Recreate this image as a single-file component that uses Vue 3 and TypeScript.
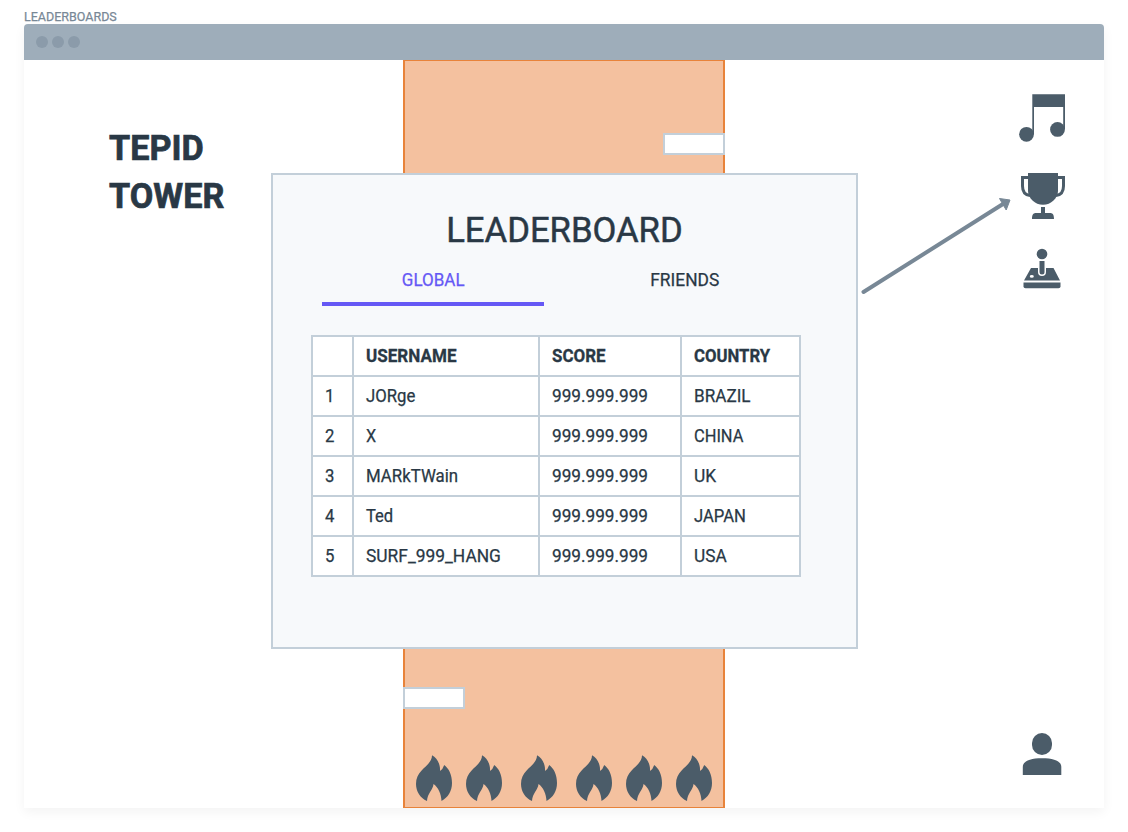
<script setup lang="ts">
interface Player {
  name: string
  nameScale: number
  score: string
  country: string
  countryScale: number
}

const players: Player[] = [
  { name: 'JORge', nameScale: 0.93, score: '999.999.999', country: 'BRAZIL', countryScale: 0.952 },
  { name: 'X', nameScale: 0.9, score: '999.999.999', country: 'CHINA', countryScale: 0.912 },
  { name: 'MARkTWain', nameScale: 0.935, score: '999.999.999', country: 'UK', countryScale: 0.965 },
  { name: 'Ted', nameScale: 0.92, score: '999.999.999', country: 'JAPAN', countryScale: 0.925 },
  { name: 'SURF_999_HANG', nameScale: 0.965, score: '999.999.999', country: 'USA', countryScale: 0.96 },
]

const flames: number[] = [416, 466, 521, 576, 626, 676]
</script>

<template>
  <div class="page">
    <div class="caption"><span>LEADERBOARDS</span></div>
    <main class="window">
      <header class="bar"><i></i><i></i><i></i></header>
      <section class="stage">
        <h1 class="brand"><span>TEPID</span><br><span>TOWER</span></h1>

        <div class="shaft">
          <div class="ledge ledge-top"></div>
          <div class="ledge ledge-bottom"></div>
        </div>
        <svg v-for="x in flames" :key="x" class="flame" :style="{ left: x - 24 + 'px' }" width="36" height="46" viewBox="0 0 36 46">
          <path d="M16 .3C21 3 24.500 9 24 16Q27 14 28.200 10C33 13.500 36 20 36 28C36 36 32 42.500 25.500 46C25.300 39 22 32 17.500 29C17 35 11.500 38 11 46C4 43 0 36 0 29C0 13.500 16 11.500 16 .3Z" />
        </svg>

        <section class="panel">
          <h2><span>LEADERBOARD</span></h2>
          <nav class="tabs">
            <span class="tab active"><span class="global">GLOBAL</span></span>
            <span class="tab"><span class="friends">FRIENDS</span></span>
          </nav>
          <div class="table">
            <div class="cell"></div>
            <div class="cell head"><span class="h-user">USERNAME</span></div>
            <div class="cell head"><span class="h-score">SCORE</span></div>
            <div class="cell head"><span class="h-country">COUNTRY</span></div>
            <template v-for="(p, i) in players" :key="p.name">
              <div class="cell"><span class="rank">{{ i + 1 }}</span></div>
              <div class="cell"><span :style="{ transform: `scaleX(${p.nameScale})` }">{{ p.name }}</span></div>
              <div class="cell"><span class="score">{{ p.score }}</span></div>
              <div class="cell"><span :style="{ transform: `scaleX(${p.countryScale})` }">{{ p.country }}</span></div>
            </template>
          </div>
        </section>

        <svg class="arrow" width="160" height="110" viewBox="856 190 160 110">
          <path d="M863.500 292L1003 204" fill="none" stroke="#788896" stroke-width="4" stroke-linecap="round" />
          <path d="M999.500 198.500L1010 200L1006.200 210Z" fill="#788896" stroke="#788896" stroke-width="1" stroke-linejoin="round" />
        </svg>

        <svg class="icons" width="60" height="700" viewBox="1012 90 60 700">
          <path d="M1032.300 94.300H1065V129H1063.200V107H1034V134H1032.300Z" />
          <circle cx="1026.500" cy="134.300" r="7.400" />
          <circle cx="1057.500" cy="129.400" r="7.400" />
          <path d="M1028 173H1058V191C1058 198 1051 204.800 1043 204.800C1035 204.800 1028 198 1028 191Z" />
          <path d="M1029 177.500H1022.500V186C1022.500 192 1025 195 1030 195.500M1057 177.500H1063.500V186C1063.500 192 1061 195 1056 195.500" fill="none" stroke="#4b5c69" stroke-width="3" />
          <path d="M1041 207H1045V213H1050C1053 213 1054 215 1054 219H1032C1032 215 1033 213 1036 213H1041Z" />
          <circle cx="1042" cy="254" r="5.300" />
          <path d="M1039.500 261H1044.500V272A2.500 2.500 0 0 1 1039.500 272Z" />
          <path fill-rule="evenodd" d="M1031 268H1038V272A4 4 0 0 0 1046 272V268H1053.500L1060 280.500H1024ZM1031.800 275A2 1.400 0 1 0 1031.800 277.800A2 1.400 0 1 0 1031.800 275Z" />
          <path d="M1023.500 282.500H1060.500V286.500Q1060.500 288.300 1058.500 288.300H1025.500Q1023.500 288.300 1023.500 286.500Z" />
          <rect x="1032" y="733" width="20" height="22" rx="10" />
          <path d="M1022.800 775V767C1022.800 761 1030 758.200 1042 758.200C1054 758.200 1061.300 761 1061.300 767V775Z" />
        </svg>
      </section>
    </main>
  </div>
</template>

<style>
html, body { background: #fff; overflow: hidden; }
</style>

<style scoped>
.page { width: 1128px; height: 832px; box-sizing: border-box; padding: 0 24px; font-family: Roboto, "Liberation Sans", sans-serif; font-weight: 400; color: #293845; -webkit-text-stroke: .25px currentColor; }
.page span { white-space: nowrap; }
.caption { height: 24px; padding-top: 9px; box-sizing: border-box; font-size: 13px; line-height: 15px; color: #788896; }
.caption span { display: inline-block; transform: scaleX(.962); transform-origin: left; }
.window { height: 784px; border-radius: 4px 4px 0 0; background: #fff; box-shadow: 0 4px 12px rgba(0, 0, 0, .05); }
.bar { height: 36px; box-sizing: border-box; background: #9eadba; border-radius: 4px 4px 0 0; display: flex; align-items: center; gap: 4px; padding-left: 12px; }
.bar i { width: 12px; height: 12px; border-radius: 50%; background: #8b9baa; }
.stage { position: relative; height: 748px; }
.brand { position: absolute; left: 85px; top: 65px; margin: 0; font-size: 35px; line-height: 48px; font-weight: 700; -webkit-text-stroke: .7px #293845; }
.brand span { display: inline-block; transform: scaleX(.977); transform-origin: left; }
.shaft { position: absolute; left: 379px; top: 0; width: 322px; height: 748px; box-sizing: border-box; background: #f4c19f; border: solid #e8833a; border-width: 1px 2px; }
.ledge { position: absolute; width: 62px; height: 22px; box-sizing: border-box; background: #fff; border: 2px solid #c3cfd9; }
.ledge-top { right: -2px; top: 72px; }
.ledge-bottom { left: -2px; top: 626px; }
.flame { position: absolute; top: 695px; fill: #4b5c69; }
.panel { position: absolute; left: 247px; top: 113px; width: 587px; height: 476px; box-sizing: border-box; background: #f7f9fb; border: 2px solid #c3cfd9; }
.panel h2 { margin: 32px 0 0; text-align: center; font-size: 35px; line-height: 48px; font-weight: 400; -webkit-text-stroke: .5px currentColor; }
.panel h2 span { display: inline-block; transform: scaleX(.99); }
.tabs { display: flex; gap: 30px; margin: 3px 0 0 49px; }
.tab { width: 222px; height: 48px; padding-top: 10px; box-sizing: border-box; text-align: center; font-size: 18px; line-height: 24px; }
.tab span { display: inline-block; }
.global { transform: scaleX(.945); }
.friends { transform: scaleX(.965); }
.active { color: #6558f5; -webkit-text-stroke-color: #6558f5; border-bottom: 4px solid #6558f5; }
.table { display: grid; grid-template-columns: 39px 184px 140px 117px; grid-auto-rows: 38px; gap: 2px; padding: 2px; width: 486px; margin: 29px 0 0 38px; background: #c3cfd9; }
.cell { background: #fff; padding-left: 12px; display: flex; align-items: center; font-size: 18px; line-height: 24px; }
.cell span { transform-origin: left; }
.rank { transform: scaleX(.93); }
.score { transform: scaleX(.955); }
.head { font-weight: 700; -webkit-text-stroke: .3px #293845; }
.h-user { transform: scaleX(.948); }
.h-score { transform: scaleX(.94); }
.h-country { transform: scaleX(.93); }
.arrow { position: absolute; left: 832px; top: 130px; }
.icons { position: absolute; left: 988px; top: 30px; fill: #4b5c69; }
</style>
